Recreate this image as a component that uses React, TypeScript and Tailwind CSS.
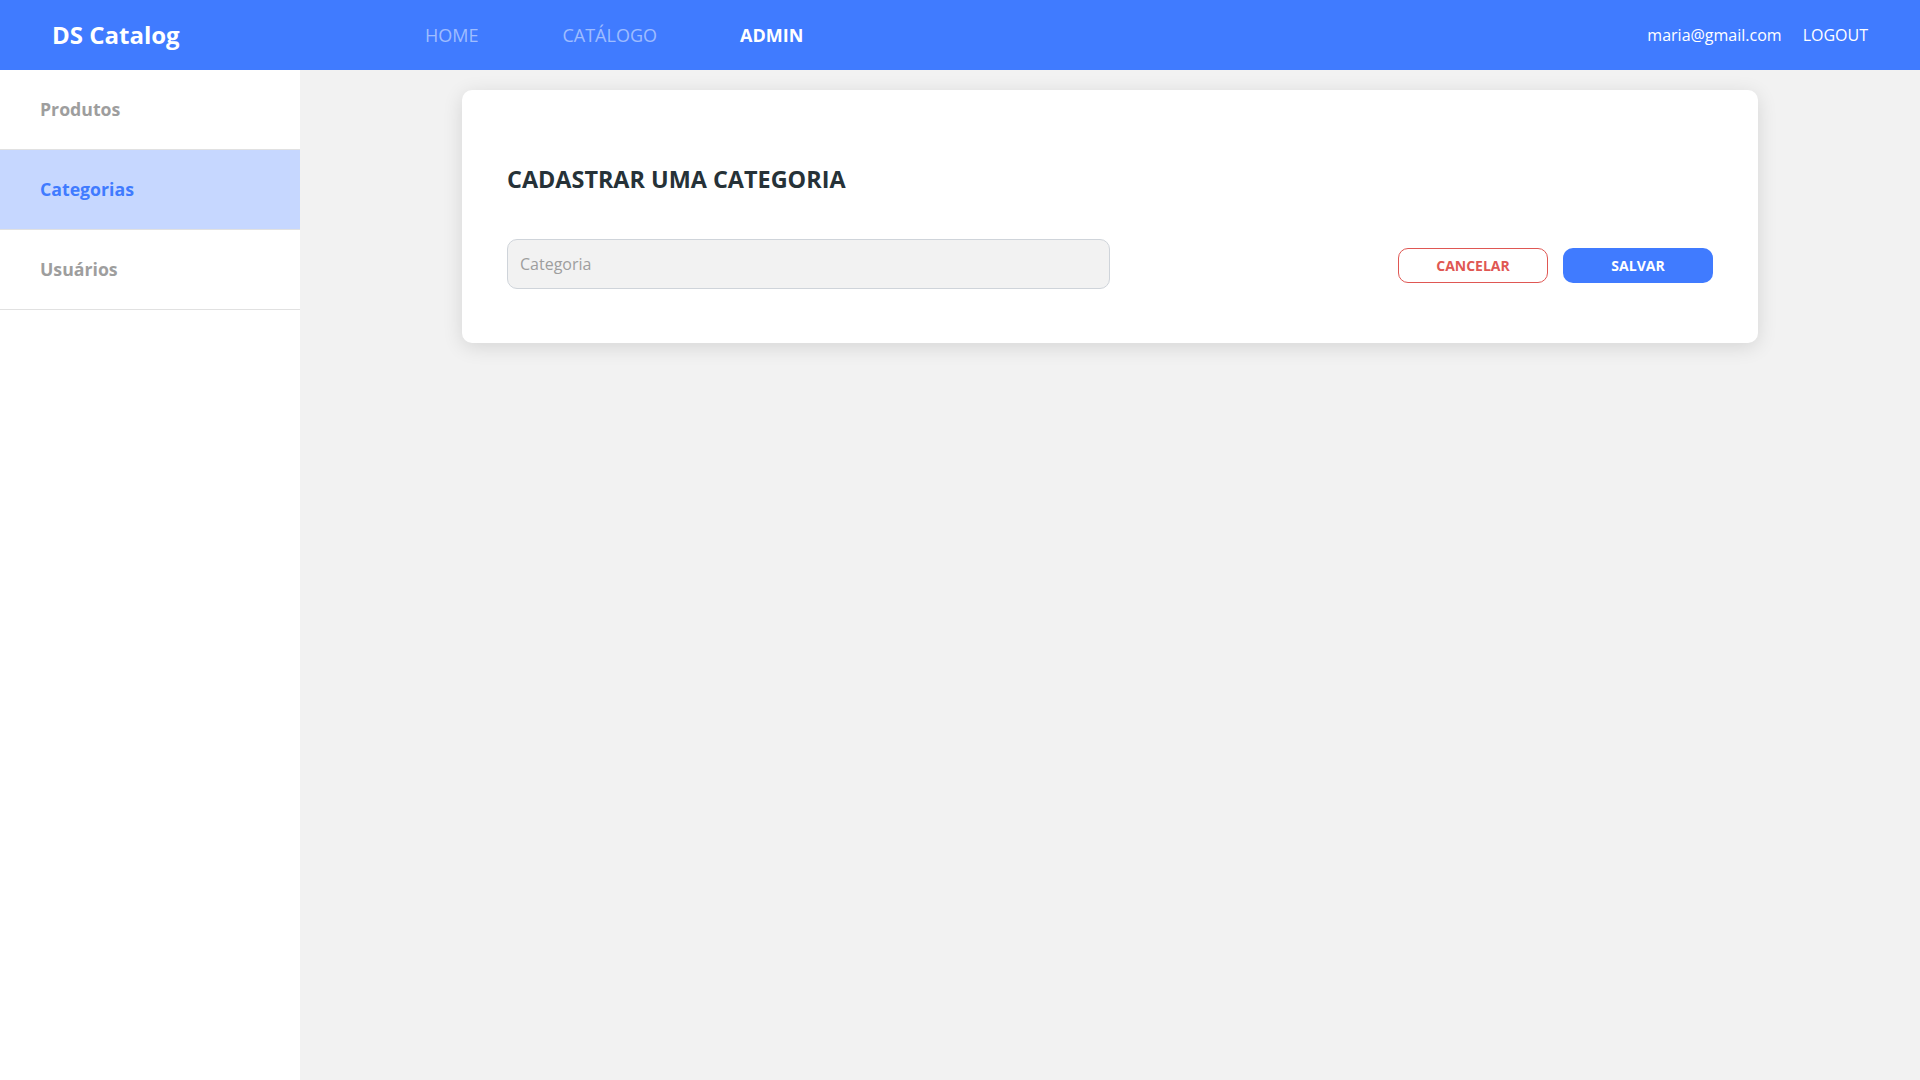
import React from "react";

export default function App() {
  return (
    <div
      className="flex h-screen w-full flex-col bg-[#F2F2F2]"
      style={{ fontFamily: '"Open Sans", "Liberation Sans", sans-serif' }}
    >
      <header className="flex h-[70px] shrink-0 items-center bg-[#407BFF] pl-[52px] pr-[52px]">
        <div className="w-[373px] text-[24px] font-bold leading-none text-white">DS Catalog</div>
        <nav className="flex items-center gap-[84px] text-[18px]">
          <span className="text-white/50">HOME</span>
          <span className="text-white/50">CATÁLOGO</span>
          <span className="-ml-[1px] font-bold text-white">ADMIN</span>
        </nav>
        <div className="ml-auto flex items-center gap-[21px] text-[16px] text-white">
          <span>maria@gmail.com</span>
          <span>LOGOUT</span>
        </div>
      </header>
      <div className="flex min-h-0 flex-1">
        <aside className="w-[300px] shrink-0 bg-white">
          <div className="flex h-[80px] items-center border-b border-[#E1E1E1] pl-10 text-[17.7px] font-bold text-[#9E9E9E]">
            Produtos
          </div>
          <div className="flex h-[80px] items-center border-b border-[#E1E1E1] bg-[#C6D7FF] pl-10 text-[17.7px] font-bold text-[#407BFF]">
            Categorias
          </div>
          <div className="flex h-[80px] items-center border-b border-[#E1E1E1] pl-10 text-[17.7px] font-bold text-[#9E9E9E]">
            Usuários
          </div>
        </aside>
        <main className="flex-1 pt-[20px]">
          <div className="mx-auto w-[80%] rounded-[10px] bg-white px-[45px] pb-[54px] pt-[73px] shadow-[0_4px_20px_rgba(0,0,0,0.12)]">
            <h1 className="text-[23.4px] font-bold leading-8 text-[#263238]">CADASTRAR UMA CATEGORIA</h1>
            <div className="mt-[44px] flex items-center justify-between">
              <input
                placeholder="Categoria"
                className="h-[50px] w-1/2 rounded-[10px] border border-[#CFD4DA] bg-[#F2F2F2] px-3 text-[16px] text-[#263238] outline-none placeholder:text-[#9E9E9E]"
              />
              <div className="mt-[3px] flex items-center gap-[15px]">
                <button className="h-[35px] w-[150px] rounded-[10px] border border-[#DF5753] bg-white text-[14px] font-bold text-[#DF5753]">
                  CANCELAR
                </button>
                <button className="h-[35px] w-[150px] rounded-[10px] bg-[#407BFF] text-[14px] font-bold text-white">
                  SALVAR
                </button>
              </div>
            </div>
          </div>
        </main>
      </div>
    </div>
  );
}
